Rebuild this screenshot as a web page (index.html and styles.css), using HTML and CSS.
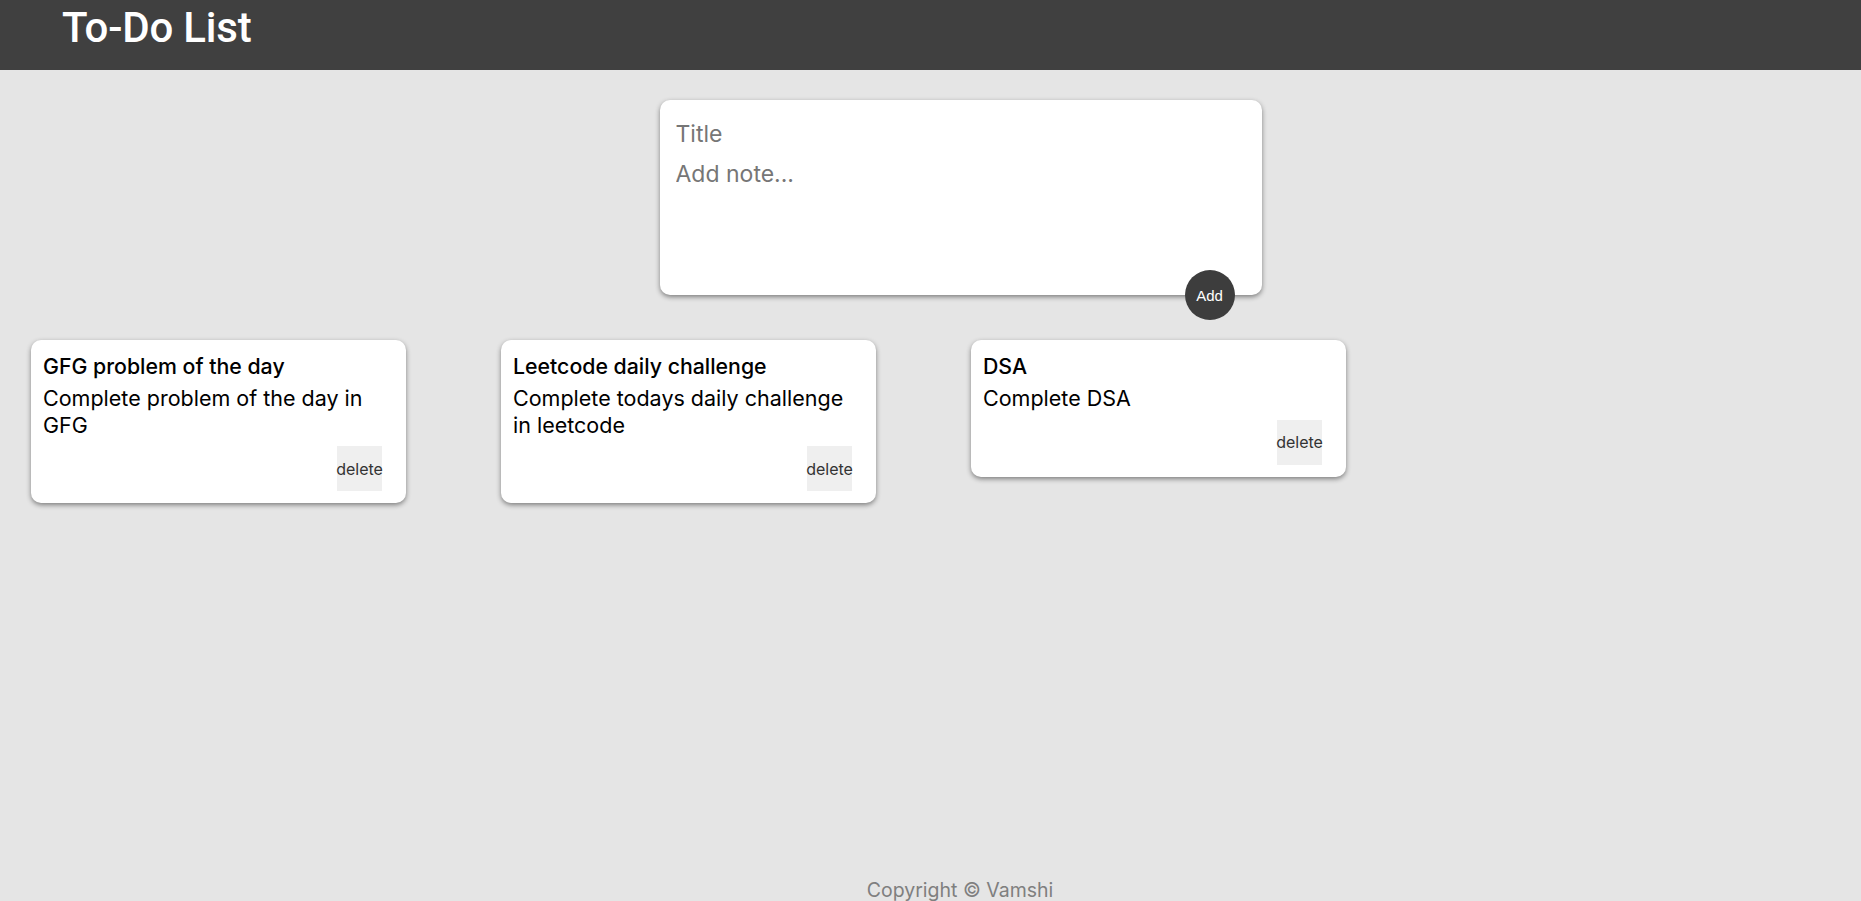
FILE: index.html
```html
<!DOCTYPE html>
<html lang="en">
<head>
<meta charset="utf-8">
<title>To-Do List</title>
<link rel="stylesheet" href="styles.css">
</head>
<body>
<header class="header">
  <h1 class="header-title">To-Do List</h1>
</header>
<main class="main">
  <div class="create-wrap">
    <form class="create-note">
      <input class="create-input" type="text" placeholder="Title">
      <textarea class="create-text" placeholder="Add note..."></textarea>
      <button class="add-btn" type="button">Add</button>
    </form>
  </div>
  <div class="notes">
    <div class="note">
      <h2 class="note-title">GFG problem of the day</h2>
      <p class="note-body">Complete problem of the day in GFG</p>
      <div class="note-actions"><button class="del-btn" type="button">delete</button></div>
    </div>
    <div class="note">
      <h2 class="note-title">Leetcode daily challenge</h2>
      <p class="note-body">Complete todays daily challenge in leetcode</p>
      <div class="note-actions"><button class="del-btn" type="button">delete</button></div>
    </div>
    <div class="note">
      <h2 class="note-title">DSA</h2>
      <p class="note-body">Complete DSA</p>
      <div class="note-actions"><button class="del-btn" type="button">delete</button></div>
    </div>
  </div>
</main>
<footer class="footer">
  <p class="footer-text">Copyright © Vamshi</p>
</footer>
</body>
</html>
```

FILE: styles.css
```css
* { box-sizing: border-box; }
html, body { height: 100%; }
body {
  margin: 0;
  background: #e5e5e5;
  font-family: Inter, Roboto, "Liberation Sans", sans-serif;
  display: flex;
  flex-direction: column;
  min-height: 100vh;
  overflow: hidden;
}
.header {
  background: #404040;
  height: 70px;
  padding: 4px 0 0 62px;
}
.header-title {
  margin: 0;
  color: #ffffff;
  font-family: Roboto, "Liberation Sans", sans-serif;
  font-size: 42px;
  font-weight: 500;
  line-height: 48px;
  letter-spacing: -0.2px;
}
.main { flex: 1; }
.create-wrap {
  padding-left: 60px;
  padding-top: 30px;
}
.create-note {
  position: relative;
  width: 602px;
  height: 195px;
  margin: 0 auto;
  background: #ffffff;
  border-radius: 10px;
  padding: 17px 15px 10px 16px;
  box-shadow: 0 2px 5px rgba(0,0,0,0.45);
  display: flex;
  flex-direction: column;
}
.create-input, .create-text {
  display: block;
  width: 100%;
  border: none;
  outline: none;
  padding: 4px 0;
  font-family: Inter, Roboto, sans-serif;
  font-size: 23px;
  line-height: 26px;
  color: #333;
  background: transparent;
  resize: none;
}
.create-text { margin-top: 6px; flex: 1; }
.create-input::placeholder, .create-text::placeholder { color: #767676; }
.add-btn {
  position: absolute;
  right: 27px;
  bottom: -25px;
  width: 50px;
  height: 50px;
  border: none;
  border-radius: 50%;
  background: #3d3d3d;
  color: #ffffff;
  font-family: "Liberation Sans", Arial, sans-serif;
  font-size: 15px;
  padding: 0;
}
.notes {
  display: flex;
  align-items: flex-start;
  gap: 95px;
  padding-left: 31px;
  margin-top: 45px;
}
.note {
  width: 375px;
  background: #ffffff;
  border-radius: 10px;
  padding: 13px 16px 12px 12px;
  box-shadow: 0 2px 5px rgba(0,0,0,0.45);
}
.note-title {
  margin: 0 0 6px 0;
  font-size: 21.3px;
  line-height: 26px;
  font-weight: 500;
  color: #000;
}
.note-body {
  margin: 0;
  font-size: 21.5px;
  line-height: 26.5px;
  color: #000;
}
.note-actions {
  display: flex;
  justify-content: flex-end;
  margin-top: 8px;
  padding-right: 8px;
}
.del-btn {
  width: 45px;
  height: 45px;
  border: none;
  background: #efefef;
  color: #333;
  font-family: Inter, Roboto, sans-serif;
  font-size: 16px;
  padding: 0;
  display: flex;
  align-items: center;
  justify-content: center;
  white-space: nowrap;
}
.footer {
  padding-left: 59px;
  text-align: center;
}
.footer-text {
  margin: 0;
  font-size: 19.5px;
  line-height: 22px;
  color: #7f7f7f;
}
```
